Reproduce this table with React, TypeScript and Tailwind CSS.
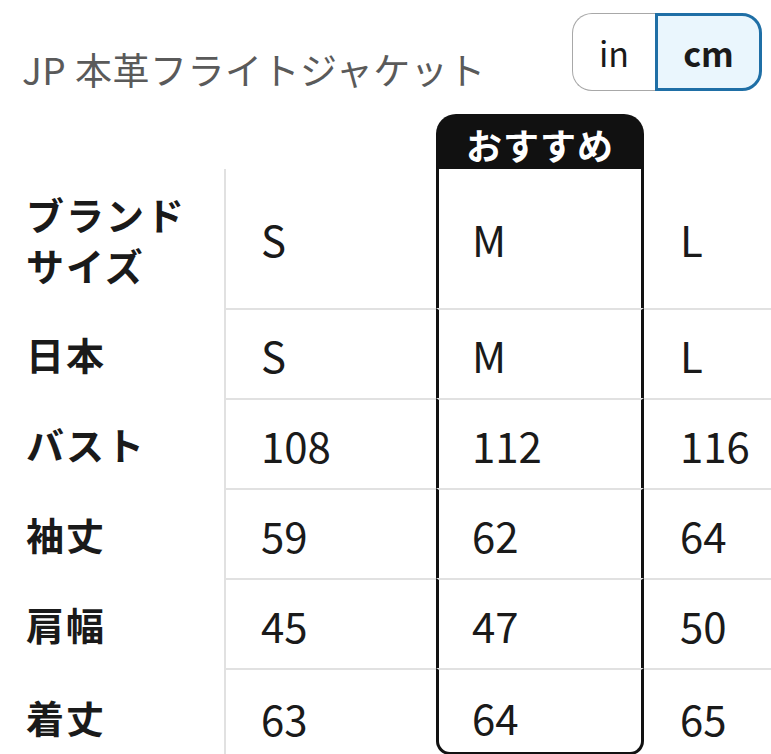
import React from 'react';

interface SizeRow {
  label: string;
  values: [string, string, string];
}

const rows: SizeRow[] = [
  { label: '日本', values: ['S', 'M', 'L'] },
  { label: 'バスト', values: ['108', '112', '116'] },
  { label: '袖丈', values: ['59', '62', '64'] },
  { label: '肩幅', values: ['45', '47', '50'] },
  { label: '着丈', values: ['63', '64', '65'] },
];

const font = { fontFamily: '"Noto Sans CJK JP", "Noto Sans", sans-serif' };

const App: React.FC = () => {
  const [unit, setUnit] = React.useState<'in' | 'cm'>('cm');

  return (
    <div className="w-[771px] h-[754px] overflow-hidden bg-white text-[#1a1a1a]" style={font}>
      {/* title + unit toggle */}
      <div className="flex justify-between items-start pl-[22px] pr-[9px] pt-[13px]">
        <h2 className="mt-[31px] text-[37px] leading-[51px] text-[#5a5a5a] font-normal tracking-[0.5px]">
          JP 本革フライトジャケット
        </h2>
        <div className="flex h-[78px] w-[190px]">
          <button
            onClick={() => setUnit('in')}
            className={`w-[83px] h-full rounded-l-[20px] border-y-[1.5px] border-l-[1.5px] border-[#a8a8a8] text-[34px] bg-white ${unit === 'in' ? 'font-bold' : 'font-normal'}`}
          >
            in
          </button>
          <button
            onClick={() => setUnit('cm')}
            className={`flex-1 h-full rounded-r-[20px] border-[3px] border-[#1f6fa6] bg-[#eaf6fd] text-[34px] ${unit === 'cm' ? 'font-bold' : 'font-normal'}`}
          >
            cm
          </button>
        </div>
      </div>

      {/* size table */}
      <div className="mt-[19px] grid grid-cols-[224px_212px_208px_1fr]">
        {/* recommended header */}
        <div className="h-[55px]" />
        <div className="h-[55px]" />
        <div className="h-[55px] rounded-t-[20px] bg-[#111] flex items-center justify-center">
          <span className="text-white font-bold text-[36px] tracking-[1px] mt-[4px]">おすすめ</span>
        </div>
        <div className="h-[55px]" />

        {/* brand size row */}
        <div className="h-[139px] flex items-center pl-[26px]">
          <span className="font-bold text-[38px] leading-[51px] tracking-[2px]">
            ブランド
            <br />
            サイズ
          </span>
        </div>
        <div className="h-[139px] flex items-center border-l-2 border-[#e1e1e1] pl-[35px] text-[42px]">S</div>
        <div className="h-[139px] flex items-center border-x-[3px] border-[#111] pl-[33px] text-[42px]">M</div>
        <div className="h-[139px] flex items-center pl-[36px] text-[42px]">L</div>

        {rows.map((row, i) => {
          const last = i === rows.length - 1;
          const h = last ? 'h-[87px] pt-[10px]' : 'h-[90px]';
          return (
            <React.Fragment key={row.label}>
              <div className={`${h} flex items-center pl-[26px]`}>
                <span className="font-bold text-[38px] tracking-[2px]">{row.label}</span>
              </div>
              <div className={`${h} flex items-center border-l-2 border-t-2 border-[#e1e1e1] pl-[35px] text-[42px]`}>
                {row.values[0]}
              </div>
              <div
                className={`${h} flex items-center border-x-[3px] border-x-[#111] border-t-2 border-t-[#e1e1e1] pl-[33px] text-[42px] ${last ? 'border-b-[3px] border-b-[#111] rounded-b-[14px]' : ''}`}
              >
                {row.values[1]}
              </div>
              <div className={`${h} flex items-center border-t-2 border-[#e1e1e1] pl-[36px] text-[42px]`}>
                {row.values[2]}
              </div>
            </React.Fragment>
          );
        })}
      </div>
    </div>
  );
};

export default App;
